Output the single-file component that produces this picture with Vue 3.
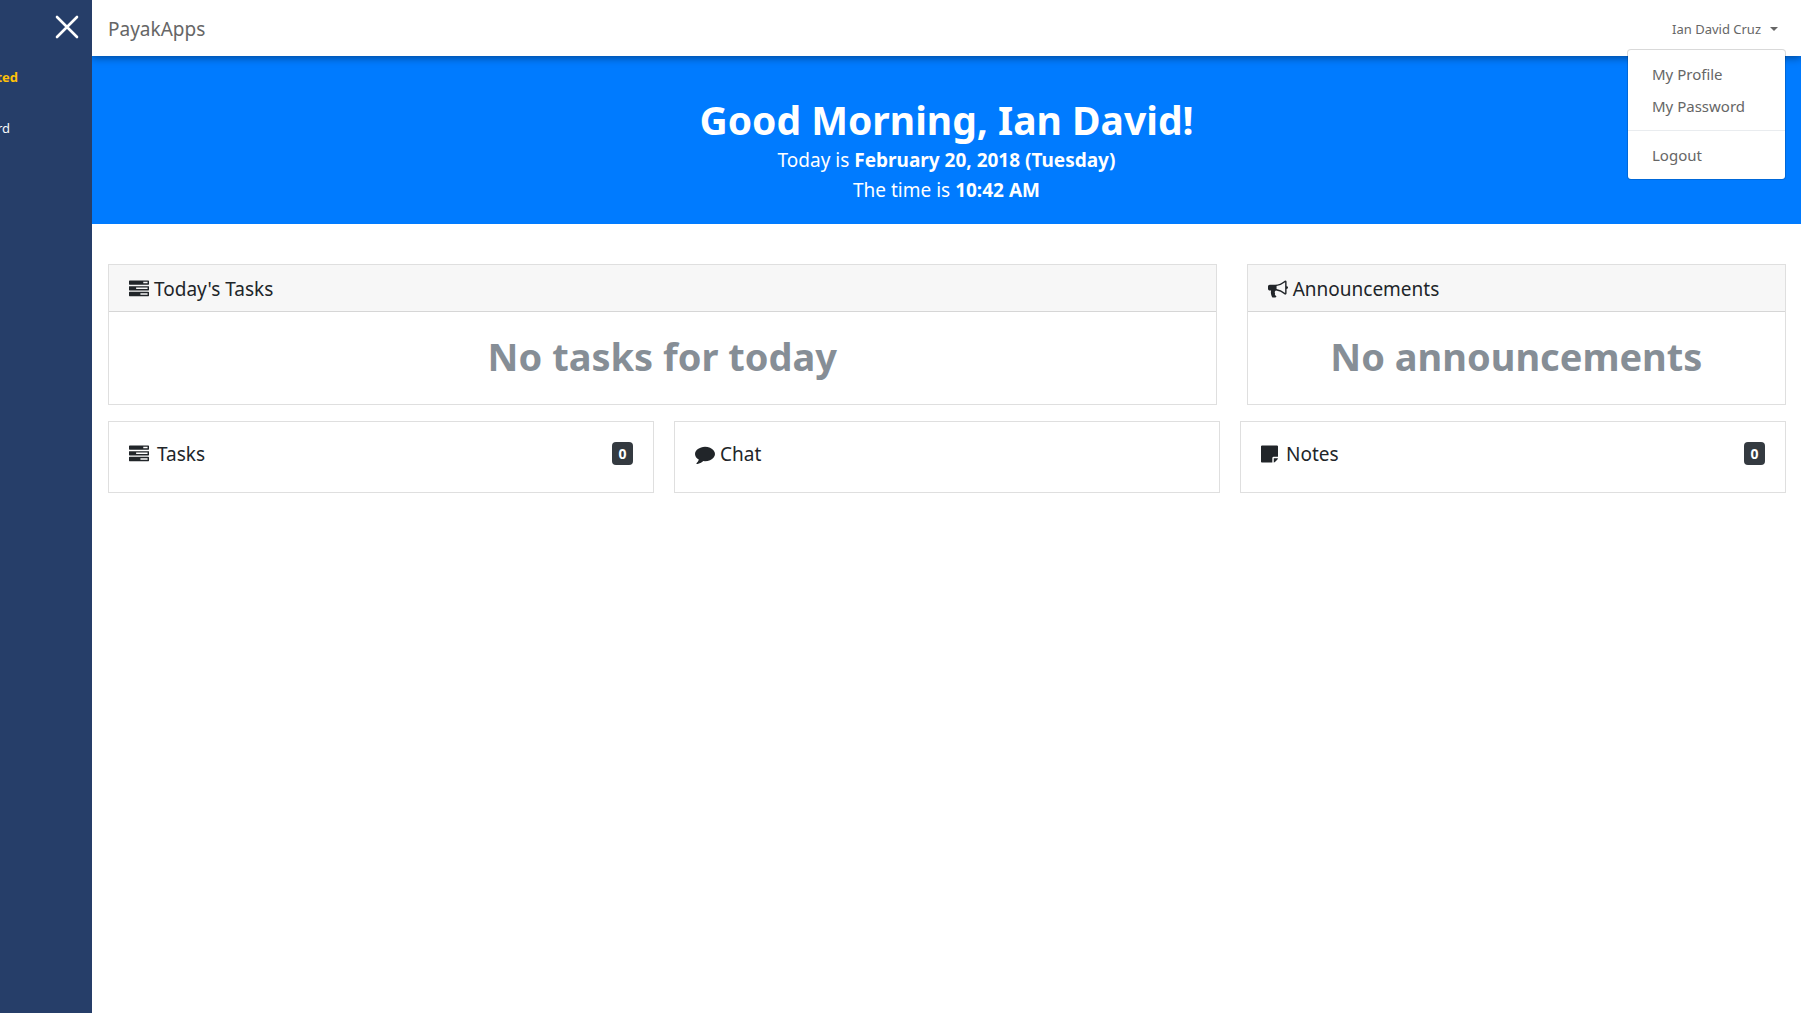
<script setup>
import { ref } from 'vue'

const menuOpen = ref(true)

const icons = {
  tasks: {
    box: '0 0 1792 1792',
    width: 20,
    path: 'M1024 1408h640v-128h-640v128zm-384-512h1024v-128h-1024v128zm640-512h384v-128h-384v128zm512 832v256q0 26-19 45t-45 19h-1664q-26 0-45-19t-19-45v-256q0-26 19-45t45-19h1664q26 0 45 19t19 45zm0-512v256q0 26-19 45t-45 19h-1664q-26 0-45-19t-19-45v-256q0-26 19-45t45-19h1664q26 0 45 19t19 45zm0-512v256q0 26-19 45t-45 19h-1664q-26 0-45-19t-19-45v-256q0-26 19-45t45-19h1664q26 0 45 19t19 45z'
  },
  bullhorn: {
    box: '0 0 1792 1792',
    width: 20,
    path: 'M1664 640q53 0 90.5 37.5t37.5 90.5-37.5 90.5-90.5 37.5v384q0 52-38 90t-90 38q-417-347-812-380-58 19-91 66t-31 100.5 40 92.5q-20 33-23 65.5t6 58 33.5 55 48 50 61.5 50.5q-29 58-111.5 83t-168.5 11.5-132-55.5q-7-23-29.5-87.5t-32-94.5-23-89-15-101 3.5-98.5 22-110.5h-122q-66 0-113-47t-47-113v-192q0-66 47-113t113-47h480q435 0 896-384 52 0 90 38t38 90v384zm-128 604v-954q-394 302-768 343v270q377 42 768 341z'
  },
  comment: {
    box: '0 0 1792 1792',
    width: 20,
    path: 'M1792 896q0 174-120 321.5t-326 233-450 85.5q-70 0-145-8-198 175-460 242-49 14-114 22-17 2-30.5-9t-17.5-29v-1q-3-4-.5-12t2-10 4.5-9.5l6-9 7-8.5 8-9q7-8 31-34.5t34.5-38 31-39.5 32.5-51 27-59 26-76q-157-89-247.5-220t-90.5-281q0-130 71-248.5t191-204.5 286-136.5 348-50.5q244 0 450 85.5t326 233 120 321.5z'
  },
  note: {
    box: '128 0 1536 1792',
    width: 17,
    path: 'M1152 1248v416h-928q-40 0-68-28t-28-68v-1344q0-40 28-68t68-28h1344q40 0 68 28t28 68v928h-416q-40 0-68 28t-28 68zm128 32h381q-15 82-65 132l-184 184q-50 50-132 65v-381z'
  }
}

const panels = [
  { title: "Today's Tasks", icon: icons.tasks, message: 'No tasks for today', wide: true },
  { title: 'Announcements', icon: icons.bullhorn, message: 'No announcements', wide: false }
]

const tiles = [
  { title: 'Tasks', icon: icons.tasks, count: 0, spaced: true },
  { title: 'Chat', icon: icons.comment, count: null, spaced: false },
  { title: 'Notes', icon: icons.note, count: 0, spaced: true }
]
</script>

<template>
  <div class="app">
    <aside class="sidebar">
      <button class="close" type="button" aria-label="Close menu">
        <svg width="24" height="24" viewBox="0 0 24 24" aria-hidden="true">
          <path d="M2 2L22 22M22 2L2 22" fill="none" stroke="#fff" stroke-width="2.6" stroke-linecap="round" />
        </svg>
      </button>
      <nav class="side-nav">
        <a class="side-link featured" href="#">ted</a>
        <a class="side-link" href="#">rd</a>
      </nav>
    </aside>

    <div class="page">
      <header class="topbar">
        <a class="brand" href="#">PayakApps</a>
        <div class="account">
          <button class="account-toggle" type="button" :aria-expanded="menuOpen" @click="menuOpen = !menuOpen">
            Ian David Cruz
            <span class="caret"></span>
          </button>
          <div v-if="menuOpen" class="menu">
            <a href="#">My Profile</a>
            <a href="#">My Password</a>
            <hr />
            <a href="#">Logout</a>
          </div>
        </div>
      </header>

      <section class="hero">
        <h1>Good Morning, Ian David!</h1>
        <p>Today is <strong>February 20, 2018 (Tuesday)</strong></p>
        <p>The time is <strong>10:42 AM</strong></p>
      </section>

      <main class="content">
        <div class="panels">
          <section v-for="p in panels" :key="p.title" class="card" :class="{ wide: p.wide }">
            <h2 class="card-header">
              <svg :width="p.icon.width" height="20" :viewBox="p.icon.box" aria-hidden="true"><path :d="p.icon.path" /></svg>
              {{ p.title }}
            </h2>
            <p class="empty">{{ p.message }}</p>
          </section>
        </div>
        <div class="tiles">
          <section v-for="t in tiles" :key="t.title" class="card tile">
            <h2 class="tile-title" :class="{ spaced: t.spaced }">
              <svg :width="t.icon.width" height="20" :viewBox="t.icon.box" aria-hidden="true"><path :d="t.icon.path" /></svg>
              {{ t.title }}
            </h2>
            <span v-if="t.count !== null" class="badge">{{ t.count }}</span>
          </section>
        </div>
      </main>
    </div>
  </div>
</template>

<style>
body {
  margin: 0;
  background: #fff;
}
</style>

<style scoped>
.app {
  display: flex;
  min-height: 100vh;
  font-family: "Noto Sans", "Open Sans", sans-serif;
  font-size: 19px;
  line-height: 30px;
  color: #212529;
}

a {
  color: inherit;
  text-decoration: none;
}

button {
  padding: 0;
  border: 0;
  background: none;
  font-family: inherit;
  color: inherit;
  cursor: pointer;
}

h1,
h2,
p {
  margin: 0;
  font-weight: 400;
}

.sidebar {
  flex: 0 0 92px;
  box-sizing: border-box;
  padding-top: 15px;
  background: #263e69;
  overflow: hidden;
}

.close {
  display: block;
  margin: 0 13px 0 auto;
  height: 24px;
}

.close svg {
  display: block;
}

.side-nav {
  display: flex;
  flex-direction: column;
  gap: 27px;
  margin-top: 26px;
}

.side-link {
  display: flex;
  justify-content: flex-end;
  width: 10px;
  font-size: 13px;
  line-height: 24px;
  color: #f8f9fa;
}

.side-link.featured {
  width: 18px;
  font-weight: 700;
  color: #ffc107;
}

.page {
  flex: 1;
  min-width: 0;
}

.topbar {
  position: relative;
  z-index: 1;
  display: flex;
  align-items: center;
  justify-content: space-between;
  box-sizing: border-box;
  height: 56px;
  padding: 2px 15px 0 16px;
  background: #fff;
  box-shadow: 0 2px 8px rgba(0, 0, 0, 0.4);
  clip-path: inset(0 0 -200px 0);
  color: #666;
}

.account {
  position: relative;
}

.account-toggle {
  display: flex;
  align-items: center;
  gap: 9px;
  padding-right: 8px;
  font-size: 13px;
  line-height: 24px;
}

.caret {
  border: 4px solid transparent;
  border-top-color: currentColor;
  border-bottom: 0;
}

.menu {
  position: absolute;
  top: 32px;
  right: 0;
  box-sizing: border-box;
  width: 159px;
  padding: 8px 0;
  border: 1px solid rgba(0, 0, 0, 0.15);
  border-radius: 4px;
  background: #fff;
  background-clip: padding-box;
  font-size: 15px;
  line-height: 32px;
}

.menu a {
  display: block;
  padding: 0 24px;
}

.menu hr {
  height: 1px;
  margin: 8px 0;
  border: 0;
  background: #e9ecef;
}

.hero {
  padding: 40px 16px 19px;
  background: #007bff;
  color: #fff;
  text-align: center;
}

.hero h1 {
  margin-bottom: 1px;
  font-size: 39px;
  font-weight: 700;
  line-height: 48px;
}

.content {
  display: flex;
  flex-direction: column;
  gap: 16px;
  padding: 40px 15px 40px 16px;
}

.panels {
  display: grid;
  grid-template-columns: repeat(12, 1fr);
  gap: 30px;
}

.tiles {
  display: grid;
  grid-template-columns: repeat(3, 1fr);
  gap: 20px;
}

.card {
  grid-column: span 4;
  min-width: 0;
  border: 1px solid #dfdfdf;
}

.card.wide {
  grid-column: span 8;
}

.card svg {
  fill: currentColor;
}

.card-header,
.tile-title {
  display: flex;
  align-items: center;
  gap: 5px;
  font-size: 19px;
}

.card-header {
  padding: 9px 20px 7px;
  border-bottom: 1px solid #d6d6d6;
  background: #f7f7f7;
}

.empty {
  padding: 20px 20px 24px;
  font-size: 38px;
  font-weight: 700;
  line-height: 48px;
  color: #868e96;
  text-align: center;
}

.tiles .card {
  grid-column: auto;
}

.tile {
  display: flex;
  align-items: flex-start;
  justify-content: space-between;
  padding: 17px 20px 23px;
}

.tile-title.spaced {
  gap: 8px;
}

.badge {
  min-width: 21px;
  margin-top: 3px;
  border-radius: 4px;
  background: #343a40;
  color: #fff;
  font-size: 14px;
  font-weight: 700;
  line-height: 23px;
  text-align: center;
}
</style>
